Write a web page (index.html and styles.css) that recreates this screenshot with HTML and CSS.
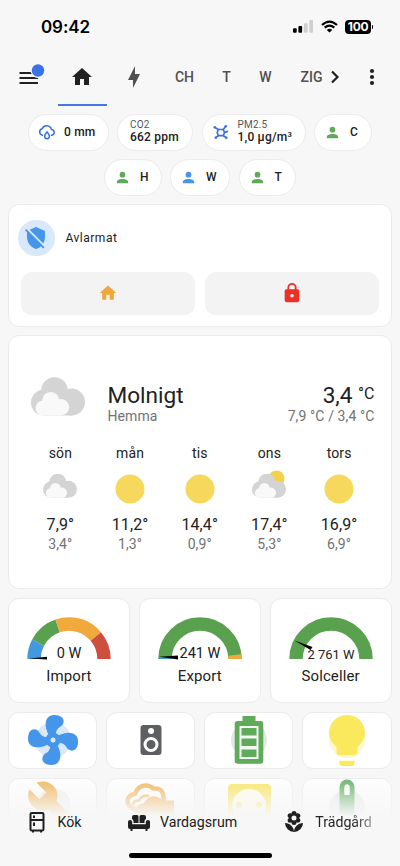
FILE: index.html
```html
<!DOCTYPE html>
<html lang="sv">
<head>
<meta charset="utf-8">
<meta name="viewport" content="width=device-width, initial-scale=1">
<title>Hemma</title>
<link rel="stylesheet" href="styles.css">
</head>
<body>
<svg class="defs" width="0" height="0" aria-hidden="true">
  <defs>
    <symbol id="home" viewBox="0 0 24 24"><path d="M10,20V14H14V20H19V12H22L12,3L2,12H5V20H10Z"/></symbol>
    <symbol id="account" viewBox="0 0 24 24"><path d="M12,4A4,4 0 0,1 16,8A4,4 0 0,1 12,12A4,4 0 0,1 8,8A4,4 0 0,1 12,4M12,14C16.42,14 20,15.79 20,18V20H4V18C4,15.79 7.58,14 12,14Z"/></symbol>
    <symbol id="cloudy" viewBox="0 0 54 39">
      <g fill="#d4d4d4"><circle cx="23.5" cy="13.5" r="13.3"/><circle cx="13" cy="25.5" r="13"/><circle cx="40.5" cy="25" r="13.5"/><rect x="13" y="20" width="28" height="18.5"/></g>
      <g fill="#f9f9f9"><circle cx="19.7" cy="23.7" r="8.6"/><circle cx="12" cy="31" r="7.5"/><circle cx="30" cy="30.3" r="8.2"/><rect x="12" y="27" width="18" height="11.5"/></g>
    </symbol>
  </defs>
</svg>
<div class="phone">
  <header class="status">
    <span class="time">09:42</span>
    <span class="signals">
      <svg width="20" height="13" viewBox="0 0 20 13"><rect x="0" y="8.3" width="3.7" height="4.4" rx="1"/><rect x="5.4" y="6" width="3.7" height="6.7" rx="1"/><g fill="#cfcfcf"><rect x="10.9" y="3.2" width="3.7" height="9.5" rx="1"/><rect x="16.3" y="0" width="3.7" height="12.7" rx="1"/></g></svg>
      <svg width="17" height="13" viewBox="0 0 17 13"><g fill="none" stroke="#000" stroke-width="2.2"><path d="M1 5Q8.500 -1.900 16 5"/><path d="M3.700 7.700Q8.500 3.500 13.300 7.700"/></g><path d="M8.500 12.600L5.800 9.900Q8.500 7.600 11.200 9.900Z"/></svg>
      <span class="battery">100</span>
    </span>
  </header>

  <nav class="tabs">
    <span class="menu"><svg width="28" height="28" viewBox="0 0 28 28"><g fill="#212121"><rect x="1.500" y="9" width="18.500" height="2"/><rect x="1.500" y="14" width="18.500" height="2"/><rect x="1.500" y="19" width="18.500" height="2"/></g><circle cx="20" cy="7.500" r="7.500" fill="#f7f7f7"/><circle cx="20" cy="7.500" r="6.200" fill="#3a71e6"/></svg></span>
    <span class="tab active"><svg class="i24"><use href="#home"/></svg></span>
    <span class="tab flash"><svg class="i24" viewBox="0 0 24 24"><path d="M11 15H6L13 1V9H18L11 23V15Z"/></svg></span>
    <span class="tab ch">CH</span>
    <span class="tab t">T</span>
    <span class="tab w">W</span>
    <span class="tab zig">ZIG</span>
    <svg class="chev" width="10" height="14" viewBox="0 0 10 14"><path d="M2 1.500L7.500 7L2 12.500" fill="none" stroke="#212121" stroke-width="2.200"/></svg>
    <svg class="dots" width="6" height="18" viewBox="0 0 6 18"><circle cx="3" cy="3" r="2.100"/><circle cx="3" cy="9" r="2.100"/><circle cx="3" cy="15" r="2.100"/></svg>
  </nav>

  <main>
    <section class="chips">
      <div class="chip rain"><svg width="18" height="18" viewBox="0 0 18 18"><g fill="none" stroke="#3b72df" stroke-width="1.500"><path d="M5 12.200H4.300A3.300 3.300 0 0 1 4.100 5.800A5 5 0 0 1 13.500 6.500A2.900 2.900 0 0 1 14 12.200H12.800"/><path d="M9 8.800C7.900 10.400 6.600 11.800 6.600 13.300A2.400 2.400 0 0 0 11.400 13.300C11.400 11.800 10.100 10.400 9 8.800Z"/></g></svg><b>0 mm</b></div>
      <div class="chip co2"><span class="stack"><small>CO2</small><b>662 ppm</b></span></div>
      <div class="chip pm"><svg width="18" height="18" viewBox="0 0 18 18"><g fill="none" stroke="#3b72df" stroke-width="1.700"><path d="M6.300 6.500H11.300L12.500 9.500L11.300 12.700H6.300L5.200 9.500Z"/><path d="M6.300 6.500L3 4.500M11.300 6.500L13.500 3.500M12.500 9.500L15 8.500M11.300 12.700L14 14.500M6.300 12.700L4 14.500"/></g><g fill="#3b72df"><circle cx="2.800" cy="4.300" r="1.300"/><circle cx="13.800" cy="3.300" r="1.300"/><circle cx="15.200" cy="8.500" r="1.100"/><circle cx="14.300" cy="14.700" r="1.300"/><circle cx="3.800" cy="14.700" r="1.300"/></g></svg><span class="stack"><small>PM2.5</small><b>1,0 µg/m³</b></span></div>
      <div class="chip c"><svg class="i18 green"><use href="#account"/></svg><b>C</b></div>
      <div class="chip h"><svg class="i18 green"><use href="#account"/></svg><b>H</b></div>
      <div class="chip w2"><svg class="i18 sky"><use href="#account"/></svg><b>W</b></div>
      <div class="chip t2"><svg class="i18 green"><use href="#account"/></svg><b>T</b></div>
    </section>

    <section class="card alarm">
      <div class="alarm-head">
        <span class="shape"><svg class="i24" viewBox="0 0 24 24"><path d="M1,4.27L2.28,3L20.5,21.22L19.23,22.5L17,20.25C15.57,21.6 13.87,22.55 12,23C6.84,21.74 3,16.55 3,11V6.27L1,4.27M12,1L21,5V11C21,13.28 20.35,15.5 19.23,17.41L5.65,3.82L12,1Z"/></svg></span>
        <span>Avlarmat</span>
      </div>
      <div class="alarm-actions">
        <span class="action"><svg class="i20" fill="#f0a73a"><use href="#home"/></svg></span>
        <span class="action"><svg width="22" height="22" viewBox="0 0 24 24" fill="#ee3024"><path d="M12,17A2,2 0 0,0 14,15C14,13.890 13.100,13 12,13A2,2 0 0,0 10,15A2,2 0 0,0 12,17M18,8A2,2 0 0,1 20,10V20A2,2 0 0,1 18,22H6A2,2 0 0,1 4,20V10C4,8.890 4.900,8 6,8H7V6A5,5 0 0,1 12,1A5,5 0 0,1 17,6V8H18M12,3A3,3 0 0,0 9,6V8H15V6A3,3 0 0,0 12,3Z"/></svg></span>
      </div>
    </section>

    <section class="card weather">
      <div class="now">
        <svg class="now-icon"><use href="#cloudy"/></svg>
        <div class="state"><div class="cond">Molnigt</div><div class="sub">Hemma</div></div>
        <div class="temps"><div class="temp">3,4 <sup>°C</sup></div><div class="sub">7,9 °C / 3,4 °C</div></div>
      </div>
      <div class="forecast">
        <div class="day"><span>sön</span><svg class="wi"><use href="#cloudy" x="3" y="4.500" width="34" height="24.500"/></svg><strong>7,9°</strong><em>3,4°</em></div>
        <div class="day"><span>mån</span><svg class="wi"><circle cx="20" cy="20" r="14.500" fill="#f6d95c"/></svg><strong>11,2°</strong><em>1,3°</em></div>
        <div class="day"><span>tis</span><svg class="wi"><circle cx="20" cy="20" r="14.500" fill="#f6d95c"/></svg><strong>14,4°</strong><em>0,9°</em></div>
        <div class="day"><span>ons</span><svg class="wi"><circle cx="27.500" cy="9.500" r="8" fill="#f5d14b"/><use href="#cloudy" x="3" y="4.500" width="34" height="24.500"/></svg><strong>17,4°</strong><em>5,3°</em></div>
        <div class="day"><span>tors</span><svg class="wi"><circle cx="20" cy="20" r="14.500" fill="#f6d95c"/></svg><strong>16,9°</strong><em>6,9°</em></div>
      </div>
    </section>

    <section class="gauges">
      <div class="card gauge">
        <svg width="84" height="46" viewBox="-42 -42 84 46"><g fill="none" stroke-width="13.400"><path stroke="#4299e1" pathLength="180" stroke-dasharray="28 400" d="M-35 0A35 35 0 0 1 35 0"/><path stroke="#59a14f" pathLength="180" stroke-dasharray="0 28 43 400" d="M-35 0A35 35 0 0 1 35 0"/><path stroke="#f1a93b" pathLength="180" stroke-dasharray="0 71 69 400" d="M-35 0A35 35 0 0 1 35 0"/><path stroke="#cc4f3f" pathLength="180" stroke-dasharray="0 140 41 400" d="M-35 0A35 35 0 0 1 35 0"/></g><path d="M-40 -.6L-22 -2.200V.600Z"/><text x="0" y="-1" class="val">0 W</text></svg>
        <span>Import</span>
      </div>
      <div class="card gauge">
        <svg width="84" height="46" viewBox="-42 -42 84 46"><g fill="none" stroke-width="13.400"><path stroke="#59a14f" d="M-35 0A35 35 0 0 1 35 0"/><path stroke="#4299e1" pathLength="180" stroke-dasharray="1.500 400" d="M-35 0A35 35 0 0 1 35 0"/><path stroke="#f1a93b" pathLength="180" stroke-dasharray="0 173.500 7 400" d="M-35 0A35 35 0 0 1 35 0"/></g><path d="M-41 -2.200L-22 -3.400V.600Z"/><text x="0" y="-1" class="val">241 W</text></svg>
        <span>Export</span>
      </div>
      <div class="card gauge">
        <svg width="84" height="46" viewBox="-42 -42 84 46"><path fill="none" stroke="#59a14f" stroke-width="13.400" d="M-35 0A35 35 0 0 1 35 0"/><path d="M-36.500 -18.500L-18.500 -12L-20.500 -9Z"/><text x="0" y="-.5" class="val small">2 761 W</text></svg>
        <span>Solceller</span>
      </div>
    </section>

    <section class="tiles">
      <div class="card tile"><svg width="60" height="60" viewBox="0 0 24 24"><circle cx="12" cy="12" r="7.200" fill="#d9e9fb"/><path fill="#4595ea" d="M12,11A1,1 0 0,0 11,12A1,1 0 0,0 12,13A1,1 0 0,0 13,12A1,1 0 0,0 12,11M12.500,2C17,2 17.110,5.570 14.750,6.750C13.760,7.240 13.320,8.290 13.130,9.220C13.610,9.420 14.030,9.730 14.350,10.130C18.050,8.130 22.030,8.920 22.030,12.500C22.030,17 18.460,17.100 17.280,14.730C16.780,13.740 15.720,13.300 14.790,13.110C14.590,13.590 14.280,14 13.880,14.340C15.870,18.030 15.080,22 11.500,22C7,22 6.910,18.420 9.270,17.240C10.250,16.750 10.690,15.710 10.890,14.790C10.400,14.590 9.970,14.270 9.650,13.870C5.960,15.850 2,15.070 2,11.500C2,7 5.560,6.890 6.740,9.260C7.240,10.250 8.290,10.680 9.220,10.870C9.410,10.390 9.730,9.970 10.140,9.650C8.150,5.960 8.940,2 12.500,2Z"/></svg></div>
      <div class="card tile"><svg width="36" height="36" viewBox="0 0 24 24" fill="#5d5f62"><path d="M12,12A3,3 0 0,0 9,15A3,3 0 0,0 12,18A3,3 0 0,0 15,15A3,3 0 0,0 12,12M12,20A5,5 0 0,1 7,15A5,5 0 0,1 12,10A5,5 0 0,1 17,15A5,5 0 0,1 12,20M12,4A2,2 0 0,1 14,6A2,2 0 0,1 12,8C10.890,8 10,7.100 10,6C10,4.890 10.890,4 12,4M17,2H7C5.890,2 5,2.890 5,4V20A2,2 0 0,0 7,22H17A2,2 0 0,0 19,20V4C19,2.890 18.100,2 17,2Z"/></svg></div>
      <div class="card tile"><svg width="60" height="60" viewBox="0 0 60 60"><circle cx="30" cy="30" r="18" fill="#e3e8e3"/><path fill="#5fab5a" d="M23.500 6H36.500V11H41.500A2.800 2.800 0 0 1 44.300 13.800V51A2.800 2.800 0 0 1 41.500 53.800H18.500A2.800 2.800 0 0 1 15.700 51V13.800A2.800 2.800 0 0 1 18.500 11H23.500Z"/><rect x="20.500" y="16" width="19" height="33" fill="#f3f7f3"/><g fill="#5fab5a"><rect x="22.500" y="18" width="15" height="7.500"/><rect x="22.500" y="28.500" width="15" height="7.500"/><rect x="22.500" y="39.500" width="15" height="7.500"/></g></svg></div>
      <div class="card tile"><svg width="60" height="60" viewBox="0 0 24 24"><circle cx="12" cy="12" r="7.200" fill="#fdf8d2"/><path fill="#fbe95d" d="M12,2A7.200,7.200 0 0,0 4.800,9C4.800,11.380 6.190,13.470 7.800,14.740V17A1,1 0 0,0 8.800,18H15.200A1,1 0 0,0 16.200,17V14.740C17.810,13.470 19.200,11.380 19.200,9A7.200,7.200 0 0,0 12,2M9,21.500A1,1 0 0,0 10,22.400H14A1,1 0 0,0 15,21.500V20.300H9V21.500Z"/></svg></div>
      <div class="card tile"><svg width="60" height="60" viewBox="0 0 60 60"><circle cx="30" cy="30" r="18" fill="#eee"/><path fill="#f0ab42" transform="translate(3 3) scale(2.250)" d="M22.700,19L13.600,9.900C14.500,7.600 14,4.900 12.100,3C10.100,1 7.100,0.600 4.700,1.700L9,6L6,9L1.600,4.700C0.400,7.100 0.900,10.100 2.900,12.100C4.800,14 7.500,14.500 9.800,13.600L18.900,22.700C19.300,23.100 19.900,23.100 20.300,22.700L22.600,20.400C23.100,20 23.100,19.300 22.700,19Z"/></svg></div>
      <div class="card tile"><svg width="60" height="60" viewBox="0 0 60 60"><path fill="none" stroke="#f0ab42" stroke-width="4.500" stroke-linejoin="round" d="M15 33.500Q6 31 6.500 24.500Q8 18.500 14 18Q17 9.500 24.500 9.500Q29 9.500 32 12.500Q42 11.500 42.500 21V25"/><path fill="none" stroke="#f0ab42" stroke-width="2.500" d="M12 29Q12 24.500 18 24.500Q21 18.500 28 20"/><path fill="#f0ab42" d="M14 48V36Q15 28 23 27Q28 18 36 21Q40 22 42 24.500H53V48Z"/></svg></div>
      <div class="card tile"><svg width="60" height="60" viewBox="0 0 60 60"><rect x="9" y="8" width="43" height="43" rx="4" fill="#f8e34e"/><circle cx="30" cy="30" r="17" fill="#fffde8"/><g fill="#f8e34e"><circle cx="20" cy="29" r="3"/><circle cx="40" cy="29" r="3"/></g></svg></div>
      <div class="card tile"><svg width="60" height="60" viewBox="0 0 60 60"><circle cx="30" cy="32" r="18" fill="#e3ebe3"/><path fill="none" stroke="#4fa652" stroke-width="5" d="M25 40V11A5 5 0 0 1 35 11V40"/><path fill="#4fa652" d="M26 18H34V40H26Z"/><path fill="#fff" d="M27.500 11A2.500 2.500 0 0 1 32.500 11V19H27.500Z"/></svg></div>
    </section>
  </main>

  <footer class="dock">
    <div class="links">
      <span class="link kok"><svg class="i24" viewBox="0 0 24 24"><g fill="none" stroke="#202020" stroke-width="2"><rect x="5.500" y="3" width="13" height="17.500" rx="1.200"/><path d="M5.500 10H18.500M9 5.500V8M9 12.500V16M8 20V22.500M16 20V22.500"/></g></svg>Kök</span>
      <span class="link var"><svg class="i24" viewBox="0 0 24 24"><path d="M5 9V7Q5 5 7 5H10Q11.500 5 11.500 6.500V13H6.500V11Q6.300 9.300 5 9M12.500 13V6.500Q12.500 5 14 5H17Q19 5 19 7V9Q17.700 9.300 17.500 11V13ZM3 10Q5.200 10 5.200 12V14.200H18.800V12Q18.800 10 21 10Q23 10 23 12V17Q23 19 21 19H20.500V21H18.500V19H5.500V21H3.500V19H3Q1 19 1 17V12Q1 10 3 10Z"/></svg>Vardagsrum</span>
      <span class="link tra"><svg class="i24" viewBox="0 0 24 24"><path d="M3,13A9,9 0 0,0 12,22C12,17 7.970,13 3,13M12,5.500A2.500,2.500 0 0,1 14.500,8A2.500,2.500 0 0,1 12,10.500A2.500,2.500 0 0,1 9.500,8A2.500,2.500 0 0,1 12,5.500M5.600,10.250A2.500,2.500 0 0,0 8.100,12.750C8.630,12.750 9.120,12.580 9.500,12.310C9.500,12.370 9.500,12.430 9.500,12.500A2.500,2.500 0 0,0 12,15A2.500,2.500 0 0,0 14.500,12.500C14.500,12.430 14.500,12.370 14.500,12.310C14.880,12.580 15.370,12.750 15.900,12.750C17.280,12.750 18.400,11.630 18.400,10.250C18.400,9.250 17.810,8.400 16.970,8C17.810,7.600 18.400,6.740 18.400,5.750C18.400,4.370 17.280,3.250 15.900,3.250C15.370,3.250 14.880,3.410 14.500,3.690C14.500,3.630 14.500,3.560 14.500,3.500A2.500,2.500 0 0,0 12,1A2.500,2.500 0 0,0 9.500,3.500C9.500,3.560 9.500,3.630 9.500,3.690C9.120,3.410 8.630,3.250 8.100,3.250A2.500,2.500 0 0,0 5.600,5.750C5.600,6.740 6.190,7.600 7.030,8C6.190,8.400 5.600,9.250 5.600,10.250M12,22A9,9 0 0,0 21,13C16,13 12,17 12,22Z"/></svg><span class="fade">Trädgård</span></span>
    </div>
    <div class="homebar"></div>
  </footer>
</div>
</body>
</html>
```
FILE: styles.css
```css
* { box-sizing: border-box; }
body { margin: 0; background: #f7f7f7; font-family: Roboto, sans-serif; color: #212121; }
.defs { display: block; height: 0; }
svg { display: block; flex: none; }
.phone { position: relative; width: 400px; height: 866px; overflow: hidden; background: #f7f7f7; }
.i24 { width: 24px; height: 24px; }
.i20 { width: 20px; height: 20px; }
.i18 { width: 18px; height: 18px; }
.green { fill: #60a95b; }
.sky { fill: #4595ea; }

.status { height: 53px; display: flex; justify-content: space-between; padding: 16px 29px 0 41px; color: #000; }
.time { font: 600 17px/22px Inter, sans-serif; letter-spacing: -.1px; }
.signals { display: flex; align-items: center; gap: 7.5px; height: 21px; fill: #000; }
.battery { position: relative; width: 26px; height: 14px; border-radius: 4px; background: #000; color: #fff; font: 700 12px/14px Inter, sans-serif; text-align: center; letter-spacing: -.3px; }
.battery::after { content: ""; position: absolute; left: 26.5px; top: 5px; width: 1.5px; height: 4px; border-radius: 0 2px 2px 0; background: #000; }

.tabs { height: 53px; display: flex; align-items: center; padding: 0 0 5px 18px; font-size: 14px; font-weight: 500; color: #505050; }
.menu { width: 39.5px; }
.tab { height: 57px; display: flex; align-items: center; justify-content: center; padding-bottom: 1px; }
.active { width: 49px; fill: #212121; border-bottom: 2px solid #4576e3; border-top: 2px solid transparent; }
.flash { width: 55px; fill: #505050; }
.ch { width: 46px; }
.t { width: 38px; }
.w { width: 40px; }
.zig { width: 52px; }
.chev { margin-left: -8px; }
.dots { margin-left: 29px; fill: #212121; }

main { padding: 8px 8.5px 0 8px; }
.chips { display: flex; flex-wrap: wrap; justify-content: center; gap: 8.5px; }
.chip { height: 36.5px; border: 1px solid #ebebeb; border-radius: 18.5px; background: #fff; display: flex; align-items: center; gap: 8px; padding-left: 9px; white-space: nowrap; }
.chip b { font-size: 12px; line-height: 14px; font-weight: 500; letter-spacing: .2px; }
.chip small { font-size: 10px; line-height: 11px; font-weight: 400; color: #555; letter-spacing: .2px; }
.stack { display: flex; flex-direction: column; padding-bottom: 1.5px; }
.chip .i18 { width: 17px; height: 17px; }
.rain { width: 80.5px; }
.co2 { width: 76px; padding-left: 12px; }
.pm { width: 104px; }
.c { width: 57.5px; }
.h { width: 57.5px; }
.w2 { width: 60px; }
.t2 { width: 57px; }
.c, .h, .w2, .t2 { gap: 9px; }

.card { background: #fff; border: 1px solid #ebebeb; border-radius: 11px; }
.alarm { height: 122.5px; margin-top: 8.5px; padding: 14.5px 11.5px 0; }
.alarm-head { display: flex; align-items: center; gap: 11px; margin-left: -2.5px; font-size: 12px; letter-spacing: .5px; }
.shape { width: 36.5px; height: 36.5px; border-radius: 50%; background: #d9e9fb; display: flex; align-items: center; justify-content: center; fill: #4595ea; }
.alarm-actions { display: flex; gap: 10px; margin-top: 15.5px; }
.action { flex: 1; height: 43px; border-radius: 11px; background: #f3f3f3; display: flex; align-items: center; justify-content: center; }

.weather { height: 254px; margin-top: 8.5px; padding: 41px 16px 0 22px; }
.now { display: flex; }
.now-icon { width: 54px; height: 39px; }
.state { margin-left: 22.5px; padding-top: 5.5px; }
.cond, .temp { font-size: 22.6px; line-height: 26px; }
.temp { margin-bottom: 0; }
.temp sup { font-size: 16px; line-height: 10px; vertical-align: 4px; }
.temps { margin-left: auto; padding-top: 5.5px; text-align: right; }
.sub { font-size: 14px; line-height: 15px; color: #727272; letter-spacing: .1px; }
.forecast { display: flex; margin: 21.5px 0 0 -5.5px; }
.day { width: 69.7px; display: flex; flex-direction: column; align-items: center; font-size: 14px; line-height: 17px; letter-spacing: .1px; }
.wi { width: 40px; height: 40px; margin: 7px 0; }
.day strong { font-weight: 400; font-size: 16px; line-height: 19px; margin-top: -1px; }
.day em { font-style: normal; color: #727272; line-height: 20px; }

.gauges { display: grid; grid-template-columns: repeat(3, 1fr); gap: 9px; margin-top: 9px; }
.gauge { height: 105px; padding-top: 18px; display: flex; flex-direction: column; align-items: center; font-size: 15px; line-height: 20px; letter-spacing: .1px; }
.gauge span { margin-top: 3px; }
.gauge svg { overflow: visible; }
.val { font-size: 14.5px; text-anchor: middle; letter-spacing: 0; fill: #212121; }
.val.small { font-size: 13px; }

.tiles { display: grid; grid-template-columns: repeat(4, 1fr); gap: 9px; margin-top: 8.5px; }
.tile { height: 57px; display: flex; align-items: center; justify-content: center; overflow: hidden; }

.dock { position: absolute; left: 0; right: 0; bottom: 0; height: 96px; padding-top: 40px; background: linear-gradient(rgba(247,247,247,0), #f7f7f7 46px); }
.links { display: flex; height: 24px; align-items: center; font-size: 14.2px; }
.link { display: flex; align-items: center; gap: 9px; fill: #202020; }
.kok { margin-left: 24.5px; }
.var { margin-left: 45.5px; }
.tra { margin-left: 45px; }
.fade { background: linear-gradient(90deg, #212121 65%, #9a9a9a); -webkit-background-clip: text; background-clip: text; color: transparent; }
.homebar { width: 143px; height: 5px; margin: 19px 0 0 129px; border-radius: 3px; background: #000; }
```
